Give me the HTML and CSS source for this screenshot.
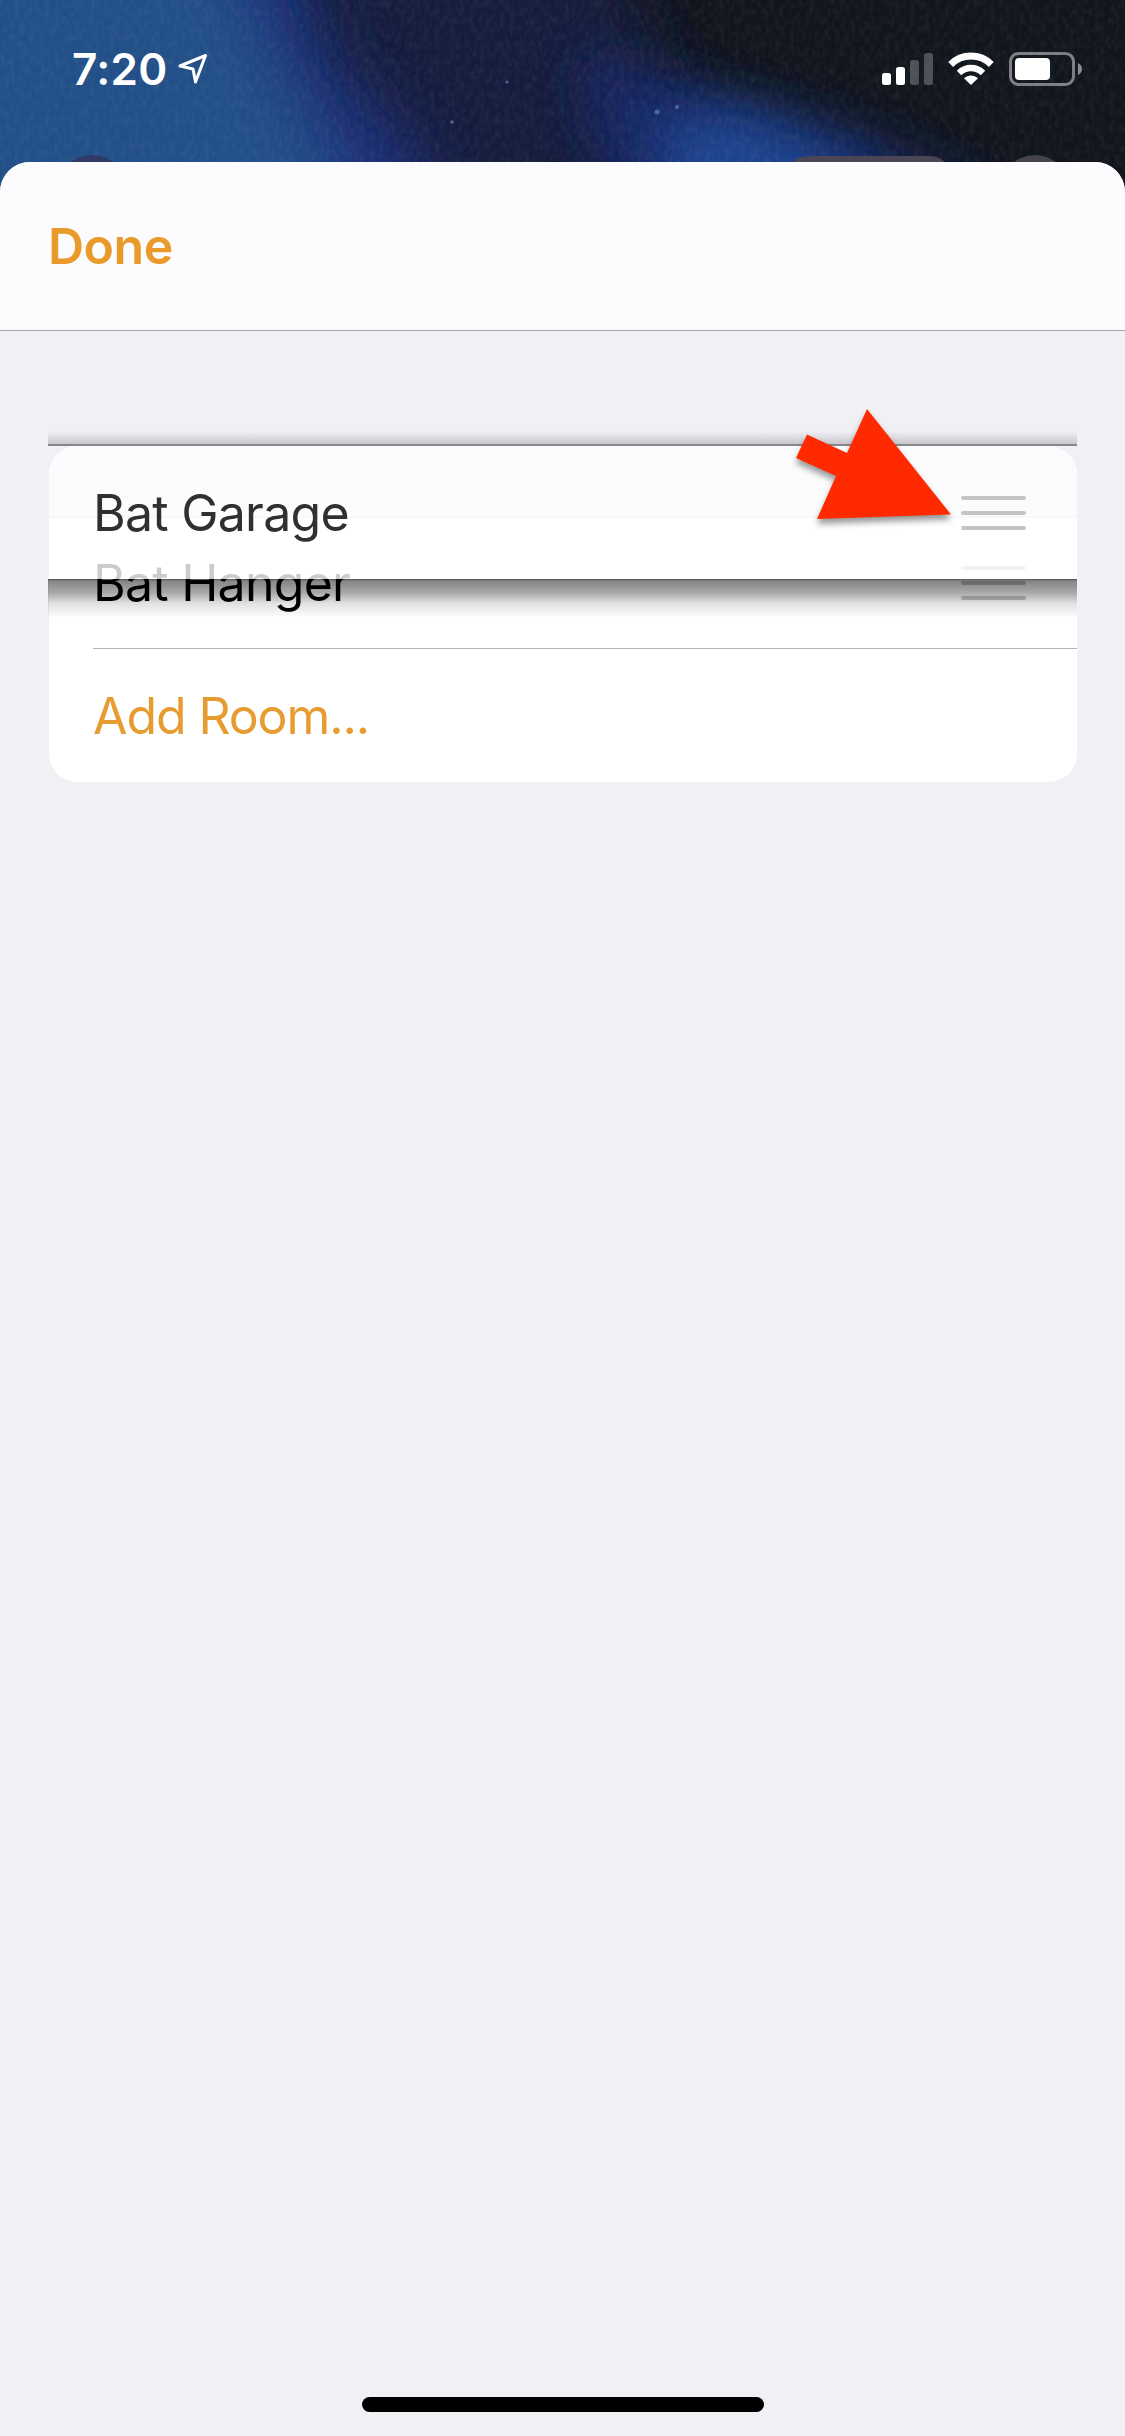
FILE: index.html
```html
<!DOCTYPE html>
<html lang="en">
<head>
<meta charset="utf-8">
<title>Rooms</title>
<link rel="stylesheet" href="styles.css">
</head>
<body>
<div class="screen">
  <svg class="wallpaper" viewBox="0 0 1125 240" preserveAspectRatio="none" aria-hidden="true">
    <defs>
      <filter id="soft" x="-50%" y="-50%" width="200%" height="200%"><feGaussianBlur stdDeviation="32"/></filter>
      <filter id="mist" x="-50%" y="-50%" width="200%" height="200%"><feGaussianBlur stdDeviation="26"/></filter>
      <filter id="grain" x="0" y="0" width="100%" height="100%">
        <feTurbulence type="fractalNoise" baseFrequency="0.2 0.12" numOctaves="3" seed="4"/>
        <feColorMatrix values="0 0 0 0 .45  0 0 0 0 .55  0 0 0 0 .6  .8 0 0 0 -.3"/>
      </filter>
    </defs>
    <rect width="1125" height="240" fill="#11151c"/>
    <path filter="url(#soft)" fill="#171b3e" d="M320-60H610L660 60 680 260H330Z"/>
    <path filter="url(#soft)" fill="#1a2f78" d="M-80-80H300L335 60 425 160 450 300H-80Z"/>
    <path filter="url(#soft)" fill="#225088" d="M-80-60H225L275 60 340 170 350 300H-80Z"/>
    <path filter="url(#mist)" fill="#182765" d="M575 60 630 62 770 110 860 135 980 190V260H650L600 150Z"/>
    <path filter="url(#mist)" fill="#1b4590" d="M665 118 740 112 805 140 870 180V260H700L660 170Z"/>
    <rect width="1125" height="240" filter="url(#grain)" opacity=".2"/>
    <g fill="#5878aa" opacity=".8"><circle cx="657" cy="112" r="2.500"/><circle cx="677" cy="107" r="2"/><circle cx="507" cy="82" r="1.500"/><circle cx="452" cy="122" r="1.800"/></g>
    <circle cx="92" cy="190" r="35" fill="#303a64"/>
    <rect x="785" y="156" width="168" height="60" rx="24" fill="#4b4656"/>
    <circle cx="1035" cy="190" r="35" fill="#46444b"/>
  </svg>

  <header class="status">
    <div class="status-left">
      <span class="time">7:20</span>
      <svg class="location" viewBox="0 0 32 34"><path d="M4 14 29.500 3.500 19.500 30 17 17Z" fill="none" stroke="#fff" stroke-width="3" stroke-linejoin="round"/></svg>
    </div>
    <div class="status-right">
      <svg class="signal" viewBox="0 0 52 34" fill="#fff"><rect y="21" width="9" height="12" rx="2.500"/><rect x="14" y="15" width="9" height="18" rx="2.500"/><g opacity=".25"><rect x="28" y="8" width="9" height="25" rx="2.500"/><rect x="42" y="1" width="9" height="32" rx="2.500"/></g></svg>
      <svg class="wifi" viewBox="0 0 46 34" fill="none" stroke="#fff"><path d="M2.700 12.500C14 1.300 32 1.300 43.300 12.500" stroke-width="7"/><path d="M11 21C18 14.400 28 14.400 35 21" stroke-width="6.500"/><path d="M16 26.300C20 22.400 26 22.400 30 26.300L23 33Z" fill="#fff" stroke="none"/></svg>
      <svg class="battery" viewBox="0 0 74 34"><rect x="1.500" y="1.500" width="63" height="31" rx="8" fill="none" stroke="#fff" stroke-opacity=".45" stroke-width="3"/><rect x="6" y="6" width="35" height="22" rx="4" fill="#fff"/><path d="M69 11Q73 13 73 17T69 23Z" fill="#fff" fill-opacity=".5"/></svg>
    </div>
  </header>

  <main class="sheet">
    <nav class="navbar"><span class="done">Done</span></nav>
    <section class="list">
      <div class="row row-room">
        <span class="label">Bat Hanger</span>
        <span class="handle"><i></i><i></i><i></i></span>
      </div>
      <div class="row row-add"><span class="label">Add Room...</span></div>
      <div class="drag">
        <div class="row row-drag">
          <span class="label">Bat Garage</span>
          <span class="handle"><i></i><i></i><i></i></span>
        </div>
      </div>
      <svg class="pointer" viewBox="0 0 170 126"><path d="M161 109.500 77 4 57 48 17 29.500 6 53 46 71 27 114Z" fill="#ff2a00"/></svg>
    </section>
    <div class="home"></div>
  </main>
</div>
</body>
</html>
```
FILE: styles.css
```css
* { box-sizing: border-box; }
body { margin: 0; font-family: Inter, "Liberation Sans", sans-serif; }
svg { display: block; }

.screen {
  position: relative;
  width: 1125px;
  height: 2436px;
  display: flex;
  flex-direction: column;
  overflow: hidden;
  background: #11141f;
}
.wallpaper { position: absolute; inset: 0 0 auto; width: 1125px; height: 240px; }

.status {
  position: relative;
  height: 162px;
  padding: 52px 42px 0 72px;
  display: flex;
  justify-content: space-between;
  align-items: flex-start;
}
.status-left, .status-right { display: flex; height: 34px; align-items: center; }
.status-left { gap: 10px; }
.time { width: 94px; color: #fff; font-size: 44px; font-weight: 600; line-height: 34px; letter-spacing: .3px; white-space: nowrap; }
.location { width: 32px; height: 34px; }
.signal { width: 52px; height: 34px; margin-right: 14px; }
.wifi { width: 46px; height: 34px; margin-right: 15px; }
.battery { width: 74px; height: 34px; }

.sheet {
  position: relative;
  flex: 1;
  display: flex;
  flex-direction: column;
  background: #f0f0f5;
  border-radius: 30px 30px 0 0;
  overflow: hidden;
}
.navbar {
  height: 169px;
  padding: 0 48px;
  display: flex;
  align-items: center;
  background: #fcfcfe;
  border-bottom: 1px solid #a6a6aa;
}
.done { color: #e99a2b; font-size: 50px; font-weight: 600; line-height: 60px; letter-spacing: -.5px; }

.list {
  position: relative;
  margin: 115px 48px 0 49px;
  padding-top: 70px;
  background: #fff;
  border-radius: 28px;
}
.row { height: 133px; display: flex; align-items: center; justify-content: space-between; padding: 0 51px 0 44px; }
.label { font-size: 50px; line-height: 60px; letter-spacing: -.75px; white-space: nowrap; color: #000; }
.row-add .label { color: #e69c30; letter-spacing: -1.1px; }
.row-room { position: relative; }
.row-room::after { content: ""; position: absolute; left: 44px; right: 0; bottom: 0; height: 1px; background: #b4b4b7; }
.handle { width: 65px; height: 34px; display: flex; flex-direction: column; justify-content: space-between; }
.handle i { height: 4px; border-radius: 2px; background: #c4c4c7; }

/* Row being dragged, translucent over the rows below it */
.drag { position: absolute; left: -1px; right: 0; top: 0; height: 133px; }
.drag::before, .drag::after { content: ""; position: absolute; left: 0; right: 0; }
.drag::before { top: -15px; height: 15px; background: linear-gradient(transparent, rgba(0, 0, 0, .17) 88%, #87878b 89%); }
.drag::after { top: 133px; height: 39px; background: linear-gradient(rgba(0, 0, 0, .66), rgba(0, 0, 0, .47) 6%, rgba(0, 0, 0, .34) 35%, rgba(0, 0, 0, .12) 62%, transparent); }
.row-drag {
  margin-left: 1px;
  border-radius: 28px 28px 0 0;
  background: linear-gradient(rgba(251, 251, 254, .8) 70px, rgba(247, 247, 250, .8) 70px 72px, rgba(255, 255, 255, .8) 72px);
}
.row-drag .label { color: #303032; }
.pointer { position: absolute; left: 741px; top: -41px; width: 170px; height: 126px; filter: drop-shadow(0 5px 3px rgba(0, 0, 0, .4)); }

.home { width: 402px; height: 15px; margin: auto auto 24px 362px; border-radius: 8px; background: #000; }
```
